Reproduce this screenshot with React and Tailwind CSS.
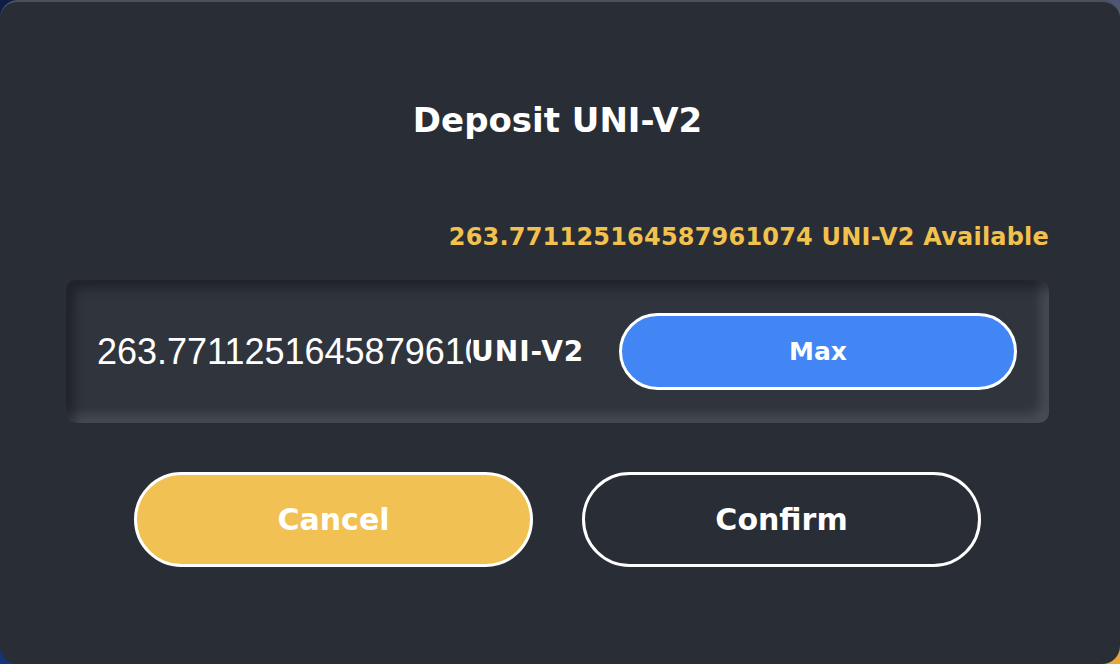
export default function App() {
  const mont = { fontFamily: '"DejaVu Sans", "Open Sans", sans-serif' };
  const arial = { fontFamily: '"Liberation Sans", Arial, sans-serif' };
  return (
    <div className="w-[1120px] h-[664px] bg-[linear-gradient(135deg,#0f1d45_0%,#1b3a8a_50%,#e8a93a_100%)]">
      <div className="w-full h-full rounded-[18px] bg-[#292d35] border-t-2 border-[#4b5059] flex flex-col pl-[66px] pr-[71px]" style={mont}>
        <h1 className="text-white font-bold text-[34px] text-center mt-[98px] leading-[40px]">Deposit UNI-V2</h1>
        <div className="text-[#f2c14e] font-bold text-[24px] text-right mt-[81px] leading-[32px] tracking-[0.2px]">263.771125164587961074 UNI-V2 Available</div>
        <div className="mt-[27px] h-[143px] rounded-[10px] bg-[#30353d] shadow-[inset_8px_8px_12px_rgba(0,0,0,0.35),inset_-8px_-8px_12px_rgba(255,255,255,0.12)] flex items-center pl-[31px] pr-[32px]">
          <input
            readOnly
            value="263.771125164587961074"
            className="w-[374px] bg-transparent outline-none text-white text-[36px] leading-[40px]"
            style={arial}
          />
          <span className="text-white font-bold text-[28px] tracking-[1px]">UNI-V2</span>
          <button className="ml-auto w-[398px] h-[77px] rounded-full bg-[#4285f4] border-[3px] border-white text-white font-bold text-[25px]">Max</button>
        </div>
        <div className="mt-[49px] flex justify-center gap-[49px]">
          <button className="w-[399px] h-[95px] rounded-full bg-[#f2c154] border-[3px] border-white text-white font-bold text-[30px]">Cancel</button>
          <button className="w-[399px] h-[95px] rounded-full bg-transparent border-[3px] border-white text-white font-bold text-[30px]">Confirm</button>
        </div>
      </div>
    </div>
  );
}
